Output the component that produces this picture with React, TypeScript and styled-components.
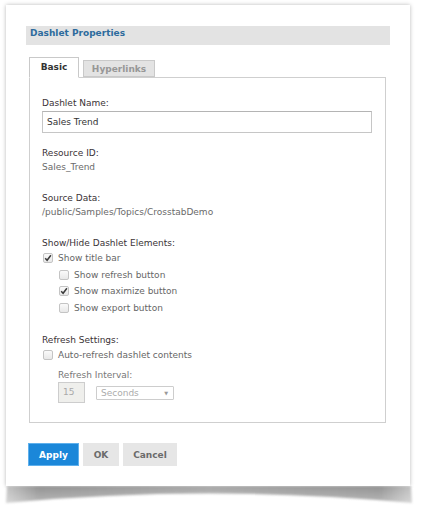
import React from 'react'
import styled, { createGlobalStyle } from 'styled-components'

const GlobalStyle = createGlobalStyle`
  html, body {
    margin: 0;
    padding: 0;
    background: #ffffff;
  }
  body {
    font-family: 'DejaVu Sans', Verdana, sans-serif;
    font-size: 9px;
    color: #333;
  }
`

const Page = styled.div`
  width: 424px;
  height: 515px;
  padding: 5px 0 0 6px;
  box-sizing: border-box;
  overflow: hidden;
`

const Card = styled.div`
  width: 404px;
  height: 481px;
  box-sizing: border-box;
  padding: 21px 20px 0 20px;
  background: #fff;
  box-shadow: 0 0 4px rgba(0, 0, 0, 0.28);
`

const Curl = styled.svg`
  display: block;
  margin-left: -2px;
`

const Header = styled.div`
  height: 19px;
  background: #e3e3e3;
  padding: 2px 4px 0;
  box-sizing: border-box;
  font-weight: bold;
  font-size: 9px;
  color: #2d6b9d;
`

const Tabs = styled.div`
  display: flex;
  align-items: flex-end;
  gap: 4px;
  margin: 12px 0 0 3px;
  position: relative;
  z-index: 1;
`

const Tab = styled.div<{ active?: boolean }>`
  height: ${(p) => (p.active ? '21px' : '17px')};
  width: ${(p) => (p.active ? '50px' : '72px')};
  box-sizing: border-box;
  display: flex;
  align-items: center;
  justify-content: center;
  font-weight: bold;
  border: 1px solid #c9c9c9;
  border-bottom: ${(p) => (p.active ? '1px solid #fff' : '1px solid #c9c9c9')};
  background: ${(p) => (p.active ? '#fff' : '#e3e3e3')};
  color: ${(p) => (p.active ? '#333' : '#979797')};
  margin-bottom: ${(p) => (p.active ? '-1px' : '0')};
  padding-bottom: ${(p) => (p.active ? '2px' : '0')};
`

const Panel = styled.div`
  margin-left: 3px;
  width: 357px;
  height: 346px;
  box-sizing: border-box;
  border: 1px solid #cfcfcf;
  padding: 18px 13px 0 12px;
  line-height: 14px;
`

const Label = styled.div<{ gap?: number; sub?: boolean }>`
  color: ${(p) => (p.sub ? '#777' : '#3a3236')};
  margin-top: ${(p) => p.gap ?? 0}px;
  margin-left: ${(p) => (p.sub ? '16px' : '0')};
`

const Value = styled.div`
  color: #6a6a6a;
`

const TextInput = styled.div`
  margin-top: 1px;
  height: 22px;
  box-sizing: border-box;
  border: 1px solid #c6c6c6;
  border-top-color: #b4b4b4;
  display: flex;
  align-items: center;
  padding-left: 4px;
  color: #333;
`

const CheckRow = styled.div<{ indent?: boolean }>`
  height: 16.5px;
  display: flex;
  align-items: center;
  gap: 5px;
  padding-left: ${(p) => (p.indent ? '17px' : '1px')};
  color: #666;
`

const Box = styled.span`
  width: 10px;
  height: 10px;
  flex: none;
  box-sizing: border-box;
  border: 1px solid #c4c4c4;
  border-radius: 2px;
  background: linear-gradient(#fafafa, #e8e8e8);
  display: flex;
  align-items: center;
  justify-content: center;
`

const IntervalRow = styled.div`
  display: flex;
  align-items: center;
  gap: 11px;
  margin-left: 16px;
`

const NumberBox = styled.div`
  width: 27px;
  height: 21px;
  box-sizing: border-box;
  background: #efefec;
  border: 1px solid #cdcdcd;
  color: #a9a9a9;
  display: flex;
  align-items: center;
  padding-left: 4px;
`

const Select = styled.div`
  width: 78px;
  height: 14px;
  box-sizing: border-box;
  border: 1px solid #cdcdcd;
  border-radius: 1px;
  display: flex;
  align-items: center;
  justify-content: space-between;
  padding: 0 5px 0 4px;
  color: #ababab;
  margin-top: 1px;
`

const Caret = styled.span`
  font-size: 5px;
  color: #999;
`

const Buttons = styled.div`
  display: flex;
  gap: 4px;
  margin: 20px 0 0 2px;
`

const Button = styled.div<{ primary?: boolean; w: number }>`
  width: ${(p) => p.w}px;
  height: 23px;
  box-sizing: border-box;
  display: flex;
  align-items: center;
  justify-content: center;
  font-weight: bold;
  background: ${(p) => (p.primary ? '#1b87d9' : '#e6e6e6')};
  color: ${(p) => (p.primary ? '#fff' : '#6b6b6b')};
  border: 1px solid ${(p) => (p.primary ? '#5fb0ec' : '#e6e6e6')};
`

const Check = () => (
  <svg width="8" height="8" viewBox="0 0 8 8">
    <path d="M1.2 4.3 L3.1 6.3 L6.9 1.2" fill="none" stroke="#3a3a3a" strokeWidth="1.5" />
  </svg>
)

const Checkbox: React.FC<{ checked?: boolean; indent?: boolean; label: string }> = ({
  checked,
  indent,
  label,
}) => (
  <CheckRow indent={indent}>
    <Box>{checked && <Check />}</Box>
    {label}
  </CheckRow>
)

// page-curl shadow under the card
const CurlShadow = () => (
  <Curl width="410" height="22" viewBox="0 0 410 22">
    <defs>
      <linearGradient id="curlH" x1="0" x2="1" y1="0" y2="0">
        <stop offset="0" stopColor="#c2c2c2" />
        <stop offset="0.08" stopColor="#929292" />
        <stop offset="0.3" stopColor="#9c9c9c" />
        <stop offset="0.5" stopColor="#a6a6a6" />
        <stop offset="0.7" stopColor="#9c9c9c" />
        <stop offset="0.92" stopColor="#929292" />
        <stop offset="1" stopColor="#c2c2c2" />
      </linearGradient>
      <linearGradient id="curlV" x1="0" x2="0" y1="0" y2="1">
        <stop offset="0" stopColor="#fff" stopOpacity="1" />
        <stop offset="1" stopColor="#fff" stopOpacity="0.55" />
      </linearGradient>
      <mask id="curlMask">
        <rect x="0" y="0" width="410" height="22" fill="url(#curlV)" />
      </mask>
      <filter id="curlBlur" x="-5%" y="-50%" width="110%" height="200%">
        <feGaussianBlur stdDeviation="1.3" />
      </filter>
    </defs>
    <g mask="url(#curlMask)">
      <path
        d="M3 0 L407 0 L408 17 Q205 -2 2 17 Z"
        fill="url(#curlH)"
        filter="url(#curlBlur)"
      />
    </g>
  </Curl>
)

export default function App() {
  return (
    <Page>
      <GlobalStyle />
      <Card>
        <Header>Dashlet Properties</Header>

        <Tabs>
          <Tab active>Basic</Tab>
          <Tab>Hyperlinks</Tab>
        </Tabs>

        <Panel>
          <Label>Dashlet Name:</Label>
          <TextInput>Sales Trend</TextInput>

          <Label gap={13}>Resource ID:</Label>
          <Value>Sales_Trend</Value>

          <Label gap={17}>Source Data:</Label>
          <Value>/public/Samples/Topics/CrosstabDemo</Value>

          <Label gap={17}>Show/Hide Dashlet Elements:</Label>
          <Checkbox checked label="Show title bar" />
          <Checkbox indent label="Show refresh button" />
          <Checkbox indent checked label="Show maximize button" />
          <Checkbox indent label="Show export button" />

          <Label gap={17}>Refresh Settings:</Label>
          <Checkbox label="Auto-refresh dashlet contents" />

          <Label gap={4} sub>
            Refresh Interval:
          </Label>
          <IntervalRow>
            <NumberBox>15</NumberBox>
            <Select>
              Seconds
              <Caret>▼</Caret>
            </Select>
          </IntervalRow>
        </Panel>

        <Buttons>
          <Button primary w={51}>
            Apply
          </Button>
          <Button w={36}>OK</Button>
          <Button w={54}>Cancel</Button>
        </Buttons>
      </Card>
      <CurlShadow />
    </Page>
  )
}
